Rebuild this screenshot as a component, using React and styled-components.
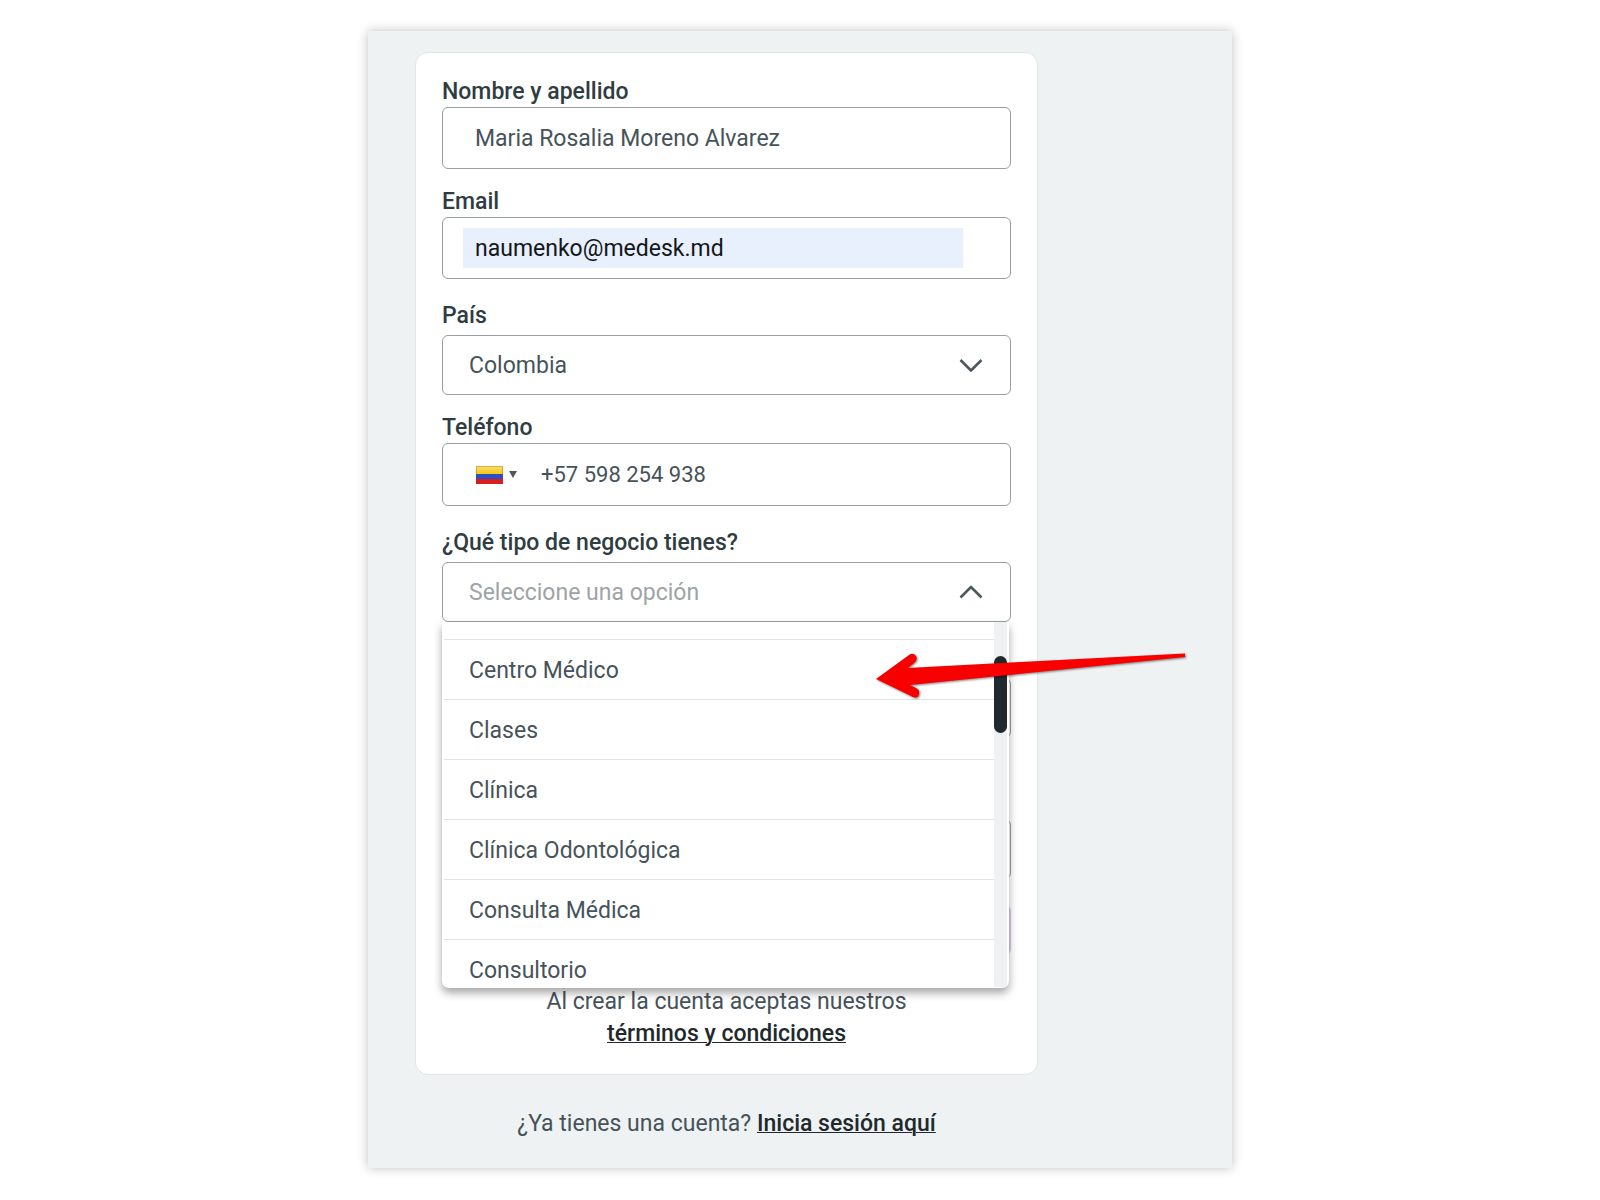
import React, { useState } from "react";
import styled, { createGlobalStyle, css } from "styled-components";

const GlobalStyle = createGlobalStyle`
  * {
    box-sizing: border-box;
  }
  body {
    margin: 0;
    background: #fff;
    color: #46535a;
    font-family: Roboto, "Liberation Sans", sans-serif;
    font-size: 23px;
  }
  input,
  select,
  button {
    font: inherit;
    color: inherit;
  }
`;

const Page = styled.main`
  display: flex;
  justify-content: center;
  padding: 31px 16px;
`;

const Panel = styled.div`
  width: 100%;
  max-width: 864px;
  padding: 21px 47px 28px;
  background: #eef2f3;
  box-shadow: 0 0 10px rgba(0, 0, 0, 0.25);
`;

const Column = styled.div`
  max-width: 623px;
`;

const Card = styled.form`
  padding: 23px 26px 24px;
  background: #fff;
  border: 1px solid #e1e6e7;
  border-radius: 13px;
`;

const Field = styled.div`
  margin-top: ${(props) => props.$gap || 17}px;

  &:first-child {
    margin-top: 0;
  }
`;

const Label = styled.label`
  display: block;
  margin-bottom: ${(props) => (props.$spaced ? 4 : 0)}px;
  line-height: 31px;
  font-weight: 500;
  color: #2f3c42;
`;

const boxStyle = css`
  border: 1px solid #979fa3;
  border-radius: 6px;
  background: #fff;
`;

const InputBox = styled.div`
  ${boxStyle}
  display: flex;
  align-items: center;
  height: ${(props) => props.$height || 62}px;
  padding: 0 47px 0 20px;
`;

const Input = styled.input`
  flex: 1;
  min-width: 0;
  height: 40px;
  padding: 0 12px;
  border: none;
  outline: none;
  background: ${(props) => (props.$filled ? "#e8effd" : "transparent")};
  color: ${(props) => (props.$filled ? "#12171a" : "inherit")};
`;

const PhoneInput = styled(Input)`
  font-size: 22px;
`;

const FlagButton = styled.button`
  display: flex;
  align-items: center;
  gap: 6px;
  padding: 0 12px 0 13px;
  border: none;
  background: none;
`;

const SelectWrap = styled.div`
  position: relative;
`;

const Select = styled.select`
  ${boxStyle}
  display: block;
  width: 100%;
  height: 60px;
  padding: 0 64px 0 26px;
  appearance: none;
  outline: none;
  color: ${(props) => (props.$empty ? "#9ea4a6" : "inherit")};
`;

const ChevronIcon = styled.svg`
  position: absolute;
  top: 22px;
  right: 28px;
  pointer-events: none;
`;

const Menu = styled.div`
  position: absolute;
  z-index: 1;
  top: 100%;
  left: 0;
  right: 2px;
  display: flex;
  height: 366px;
  padding: 0 2px 1px;
  background: #fff;
  border-radius: 0 0 7px 7px;
  box-shadow: 0 5px 8px rgba(0, 0, 0, 0.35);
`;

const OptionList = styled.ul`
  flex: 1;
  margin: 0;
  padding: 17px 0 0;
  overflow: hidden;
  list-style: none;
`;

const Option = styled.li`
  height: 60px;
  padding: 0 25px;
  border-top: 1px solid #dfe4e5;
  line-height: 62px;
  cursor: pointer;
`;

const ScrollTrack = styled.div`
  width: 13px;
  padding-top: 34px;
  background: #eef2f3;
`;

const ScrollThumb = styled.div`
  height: 77px;
  border-radius: 7px;
  background: #20292e;
`;

const Arrow = styled.svg`
  position: absolute;
  z-index: 2;
  top: 83px;
  right: -178px;
  pointer-events: none;
  filter: drop-shadow(1px 1px 1px rgba(0, 0, 0, 0.5));
`;

const SubmitButton = styled.button`
  display: block;
  width: 100%;
  height: 50px;
  margin-top: 26px;
  border: none;
  border-radius: 6px;
  background: #d9c8ef;
`;

const Text = styled.p`
  margin: ${(props) => props.$top}px 0 0;
  line-height: 32px;
  text-align: center;
`;

const Link = styled.a`
  color: #22292d;
  font-weight: 500;
  text-decoration: underline;
  text-decoration-thickness: 1px;
`;

const businessTypes = [
  "Centro Médico",
  "Clases",
  "Clínica",
  "Clínica Odontológica",
  "Consulta Médica",
  "Consultorio",
];

const Chevron = ({ up }) => (
  <ChevronIcon width="24" height="16" viewBox="0 0 24 16" fill="none">
    <path
      d={up ? "M1.500 13.500L12 3L22.500 13.500" : "M1.500 3L12 13.500L22.500 3"}
      stroke="#4d585e"
      strokeWidth="2.600"
      strokeLinejoin="round"
    />
  </ChevronIcon>
);

const Flag = () => (
  <svg width="27" height="18" viewBox="0 0 27 18">
    <defs>
      <linearGradient id="yellow" x1="0" y1="0" x2="0" y2="1">
        <stop offset="0" stopColor="#f9df6a" />
        <stop offset="1" stopColor="#f5c50c" />
      </linearGradient>
    </defs>
    <rect width="27" height="9" fill="url(#yellow)" />
    <rect y="8" width="27" height="5" fill="#2c50c4" />
    <rect y="13" width="27" height="5" fill="#dc1d20" />
    <rect
      x="0.500"
      y="0.500"
      width="26"
      height="17"
      fill="none"
      stroke="#a03a10"
      strokeOpacity="0.300"
    />
  </svg>
);

const App = () => {
  const [open, setOpen] = useState(true);
  const [business, setBusiness] = useState("");

  const toggleMenu = (e) => {
    e.preventDefault();
    setOpen(!open);
  };

  const pickOption = (option) => {
    setBusiness(option);
    setOpen(false);
  };

  return (
    <>
      <GlobalStyle />
      <Page>
        <Panel>
          <Column>
            <Card>
              <Field>
                <Label htmlFor="name">Nombre y apellido</Label>
                <InputBox>
                  <Input id="name" defaultValue="Maria Rosalia Moreno Alvarez" />
                </InputBox>
              </Field>
              <Field>
                <Label htmlFor="email">Email</Label>
                <InputBox>
                  <Input
                    id="email"
                    type="email"
                    defaultValue="naumenko@medesk.md"
                    $filled
                  />
                </InputBox>
              </Field>
              <Field $gap={21}>
                <Label htmlFor="country" $spaced>
                  País
                </Label>
                <SelectWrap>
                  <Select id="country" defaultValue="Colombia">
                    <option>Colombia</option>
                  </Select>
                  <Chevron />
                </SelectWrap>
              </Field>
              <Field>
                <Label htmlFor="phone">Teléfono</Label>
                <InputBox $height={63}>
                  <FlagButton type="button" aria-label="Prefijo">
                    <Flag />
                    <svg width="8" height="7" viewBox="0 0 8 7">
                      <path d="M0 0H8L4 7Z" fill="#555" />
                    </svg>
                  </FlagButton>
                  <PhoneInput
                    id="phone"
                    type="tel"
                    defaultValue="+57 598 254 938"
                  />
                </InputBox>
              </Field>
              <Field $gap={21}>
                <Label htmlFor="business" $spaced>
                  ¿Qué tipo de negocio tienes?
                </Label>
                <SelectWrap>
                  <Select
                    id="business"
                    value={business}
                    onMouseDown={toggleMenu}
                    onChange={(e) => pickOption(e.target.value)}
                    $empty={!business}
                  >
                    <option value="">Seleccione una opción</option>
                    {businessTypes.map((type) => (
                      <option key={type}>{type}</option>
                    ))}
                  </Select>
                  <Chevron up={open} />
                  {open && (
                    <Menu>
                      <OptionList role="listbox" aria-label="Tipo de negocio">
                        {businessTypes.map((type) => (
                          <Option
                            key={type}
                            role="option"
                            aria-selected={type === business}
                            onClick={() => pickOption(type)}
                          >
                            {type}
                          </Option>
                        ))}
                      </OptionList>
                      <ScrollTrack>
                        <ScrollThumb />
                      </ScrollTrack>
                    </Menu>
                  )}
                  <Arrow width="320" height="60" viewBox="0 0 320 60">
                    <path
                      d="M7 34L40 10Q44 7 47 11Q49 15 45 18L39 23L316 8.500V12L41 40L47 43Q51 45 50 49Q49 54 44 52Z"
                      fill="#f80000"
                    />
                  </Arrow>
                </SelectWrap>
              </Field>
              <Field $gap={56}>
                <Select aria-label="Especialidad" />
              </Field>
              <Field $gap={81}>
                <InputBox $height={60}>
                  <Input type="password" aria-label="Contraseña" />
                </InputBox>
              </Field>
              <SubmitButton type="button" aria-label="Crear cuenta" />
              <Text $top={31}>
                Al crear la cuenta aceptas nuestros
                <br />
                <Link href="#terminos">términos y condiciones</Link>
              </Text>
            </Card>
            <Text $top={33}>
              ¿Ya tienes una cuenta? <Link href="#login">Inicia sesión aquí</Link>
            </Text>
          </Column>
        </Panel>
      </Page>
    </>
  );
};

export default App;
